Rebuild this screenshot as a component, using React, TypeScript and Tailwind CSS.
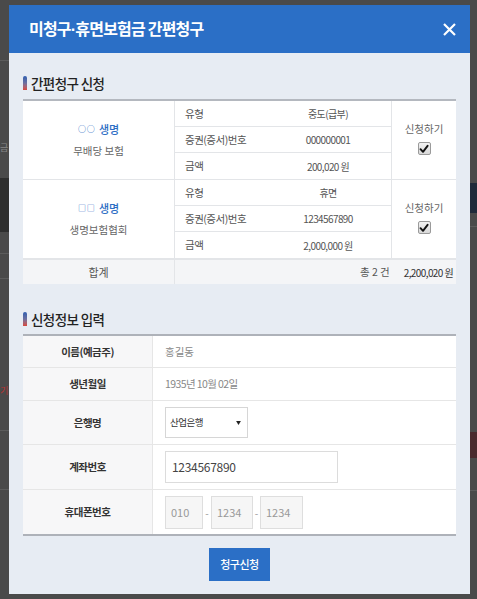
import React from "react";

const F = { fontFamily: '"Noto Sans CJK KR", "Noto Sans", sans-serif' };

function SectionTitle({ children }: { children: React.ReactNode }) {
  return (
    <div className="flex items-center gap-[4px] h-[20px]">
      <div className="w-[4px] h-[14px] rounded-t-[2px] bg-gradient-to-b from-[#2f5fb0] via-[#6a6fa0] to-[#d8443a]" />
      <span className="text-[13.5px] text-[#222] font-medium tracking-[-0.6px]">{children}</span>
    </div>
  );
}

function Check() {
  return (
    <div className="w-[13px] h-[13px] border border-[#9a9a9a] bg-gradient-to-b from-[#f2f2f2] to-[#d9d9d9] rounded-[2px] flex items-center justify-center">
      <svg width="10" height="10" viewBox="0 0 10 10">
        <path d="M1.5 5.2 L4 7.8 L8.6 1.8" stroke="#111" strokeWidth="1.9" fill="none" strokeLinecap="round" strokeLinejoin="round" />
      </svg>
    </div>
  );
}

function Group({ sym, name, rows, last }: { sym: string; name: string; rows: [string, string][]; last?: boolean }) {
  return (
    <div className={`flex ${last ? "" : "border-b border-[#e3e5e8]"}`}>
      <div className="w-[152px] flex flex-col items-center justify-center gap-[6px] border-r border-[#e3e5e8]">
        <span className="text-[11px] text-[#2c6dc4] font-medium flex items-center gap-[3px]">
          <span className="text-[8px] tracking-[1px]">{sym}</span>
          <span>생명</span>
        </span>
        <span className="text-[10.5px] text-[#666]">{name}</span>
      </div>
      <div className="w-[216px] flex flex-col">
        {rows.map(([k, v], i) => (
          <div key={i} className={`h-[26px] flex items-center ${i < rows.length - 1 ? "border-b border-[#e3e5e8]" : ""}`}>
            <span className="w-[90px] pl-[10px] text-[10.5px] text-[#555] tracking-[-0.5px]">{k}</span>
            <span className="flex-1 text-center text-[10px] text-[#555] tracking-[-0.6px]">{v}</span>
          </div>
        ))}
      </div>
      <div className="flex-1 border-l border-[#e3e5e8] flex flex-col items-center justify-center gap-[6px] pb-[4px]">
        <span className="text-[10.5px] text-[#666]">신청하기</span>
        <Check />
      </div>
    </div>
  );
}

function InfoRow({ label, h, children, last }: { label: string; h: string; children: React.ReactNode; last?: boolean }) {
  return (
    <div className={`flex ${h} ${last ? "" : "border-b border-[#e6e6e6]"}`}>
      <div className="w-[130px] bg-[#f7f7f8] border-r border-[#e6e6e6] flex items-center justify-center text-[10.5px] font-bold text-[#333] tracking-[-0.5px]">
        {label}
      </div>
      <div className="flex-1 bg-white flex items-center pl-[12px]">{children}</div>
    </div>
  );
}

export default function App() {
  return (
    <div style={F} className="relative w-[477px] h-[599px] bg-[#4a4a4a] overflow-hidden">
      {/* dimmed page behind */}
      <div className="absolute left-0 top-[60px] w-[9px] h-px bg-[#5c5c5c]" />
      <div className="absolute left-0 top-[143px] text-[9px] text-[#888] leading-none">금</div>
      <div className="absolute left-0 top-[178px] w-[9px] h-[54px] bg-[#2e2e2e]" />
      <div className="absolute left-0 top-[253px] w-[9px] h-px bg-[#5c5c5c]" />
      <div className="absolute left-0 top-[278px] w-[9px] h-px bg-[#5c5c5c]" />
      <div className="absolute left-0 top-[386px] text-[9px] text-[#b33] leading-none">기</div>
      <div className="absolute left-0 top-[430px] w-[9px] h-px bg-[#5c5c5c]" />
      <div className="absolute left-0 top-[489px] w-[9px] h-px bg-[#5c5c5c]" />
      <div className="absolute right-0 top-[183px] w-[7px] h-[30px] bg-[#1f2a3a]" />
      <div className="absolute right-0 top-[226px] w-[7px] h-px bg-[#5c5c5c]" />
      <div className="absolute right-0 top-[432px] w-[7px] h-[26px] bg-[#4a2a2e]" />
      <div className="absolute right-0 top-[490px] w-[7px] h-px bg-[#5c5c5c]" />

      {/* modal */}
      <div className="relative ml-[9px] mt-[5px] w-[461px] h-[589px] bg-[#e7ecf3] flex flex-col">
        <div className="h-[48px] bg-[#2b6fc6] flex items-center justify-between pl-[20px] pr-[14px]">
          <span className="text-[16px] font-bold text-white tracking-[-0.8px]">
            미청구<span style={{ fontFamily: '"Liberation Sans", sans-serif' }}>·</span>휴면보험금 간편청구
          </span>
          <svg width="13" height="13" viewBox="0 0 13 13">
            <path d="M1 1 L12 12 M12 1 L1 12" stroke="white" strokeWidth="2.2" />
          </svg>
        </div>

        <div className="px-[14px] pt-[20px] flex flex-col">
          <SectionTitle>간편청구 신청</SectionTitle>
          <div className="mt-[6px] border-t-2 border-[#b4b8bf] bg-white flex flex-col">
            <Group sym="○○" name="무배당 보험" rows={[["유형", "중도(급부)"], ["증권(증서)번호", "000000001"], ["금액", "200,020 원"]]} />
            <Group sym="□□" name="생명보험협회" rows={[["유형", "휴면"], ["증권(증서)번호", "1234567890"], ["금액", "2,000,000 원"]]} />
            <div className="flex h-[25px] bg-[#f4f5f7] border-t border-[#e3e5e8]">
              <div className="w-[152px] border-r border-[#e3e5e8] flex items-center justify-center text-[11px] text-[#555]">합계</div>
              <div className="flex-1 flex items-center justify-end pr-[3px] gap-[14px]">
                <span className="text-[10.5px] text-[#555]">총 2 건</span>
                <span className="text-[10px] text-[#333] tracking-[-0.6px]">2,200,020 원</span>
              </div>
            </div>
          </div>

          <div className="mt-[25px]">
            <SectionTitle>신청정보 입력</SectionTitle>
          </div>
          <div className="mt-[5px] border-t-2 border-b-2 border-[#aeb2b9] flex flex-col">
            <InfoRow label="이름(예금주)" h="h-[32px]">
              <span className="text-[10.5px] text-[#888]">홍길동</span>
            </InfoRow>
            <InfoRow label="생년월일" h="h-[33px]">
              <span className="text-[10.5px] text-[#888] tracking-[-0.6px]">1935년 10월 02일</span>
            </InfoRow>
            <InfoRow label="은행명" h="h-[44px]">
              <div className="w-[83px] h-[31px] border border-[#d6d6d6] bg-white flex items-center justify-between pl-[4px] pr-[6px]">
                <span className="text-[9.5px] text-[#333] tracking-[-0.5px]">산업은행</span>
                <svg width="5" height="4" viewBox="0 0 6 5"><path d="M0 0 H6 L3 5 Z" fill="#222" /></svg>
              </div>
            </InfoRow>
            <InfoRow label="계좌번호" h="h-[45px]">
              <div className="w-[173px] h-[32px] border border-[#dcdcdc] bg-white flex items-center pl-[6px] text-[12px] text-[#444] tracking-[-0.3px]">
                1234567890
              </div>
            </InfoRow>
            <InfoRow label="휴대폰번호" h="h-[44px]" last>
              <div className="flex items-center">
                <div className="w-[38px] h-[33px] border border-[#dedede] bg-[#f6f6f6] flex items-center pl-[5px] text-[11px] text-[#999]">010</div>
                <span className="w-[8px] text-center text-[10px] text-[#999]">-</span>
                <div className="w-[42px] h-[33px] border border-[#dedede] bg-[#f6f6f6] flex items-center pl-[5px] text-[11px] text-[#999]">1234</div>
                <span className="w-[7px] text-center text-[10px] text-[#999]">-</span>
                <div className="w-[43px] h-[33px] border border-[#dedede] bg-[#f6f6f6] flex items-center pl-[5px] text-[11px] text-[#999]">1234</div>
              </div>
            </InfoRow>
          </div>

          <div className="mt-[12px] flex justify-center">
            <button className="w-[61px] h-[33px] bg-[#2b6fc6] text-white text-[11px] font-medium tracking-[-0.5px]">청구신청</button>
          </div>
        </div>
      </div>
    </div>
  );
}
